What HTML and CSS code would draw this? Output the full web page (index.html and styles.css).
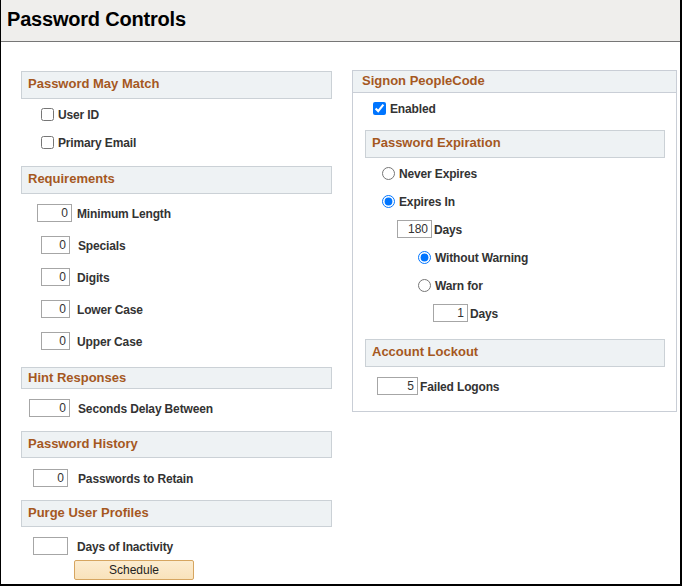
FILE: index.html
```html
<!DOCTYPE html>
<html>
<head>
<meta charset="utf-8">
<title>Password Controls</title>
<link rel="stylesheet" href="styles.css">
</head>
<body>
<div class="frame">
  <div class="titlebar"><h1>Password Controls</h1></div>
  <div class="content">
    <div class="col-left">
      <div class="sec-head">Password May Match</div>
      <label class="chk-row first"><input type="checkbox"><span class="txt">User ID</span></label>
      <label class="chk-row"><input type="checkbox"><span class="txt">Primary Email</span></label>

      <div class="sec-head mt10">Requirements</div>
      <div class="req-list">
        <div class="row pad16"><input class="num w35" type="text" value="0"><span class="lbl g5">Minimum Length</span></div>
        <div class="row pad20"><input class="num w29" type="text" value="0"><span class="lbl g8">Specials</span></div>
        <div class="row pad20"><input class="num w29" type="text" value="0"><span class="lbl g7">Digits</span></div>
        <div class="row pad20"><input class="num w29" type="text" value="0"><span class="lbl g7">Lower Case</span></div>
        <div class="row pad20"><input class="num w29" type="text" value="0"><span class="lbl g7">Upper Case</span></div>
      </div>

      <div class="sec-head short mt10">Hint Responses</div>
      <div class="row pad8 mt3"><input class="num w41" type="text" value="0"><span class="lbl g8">Seconds Delay Between</span></div>

      <div class="sec-head h27 mt7">Password History</div>
      <div class="row pad12 mt4"><input class="num w35" type="text" value="0"><span class="lbl g10">Passwords to Retain</span></div>

      <div class="sec-head h27 mt6">Purge User Profiles</div>
      <div class="row tight pad12 mt10"><input class="num w35" type="text" value=""><span class="lbl g9">Days of Inactivity</span></div>
      <button class="btn" type="button">Schedule</button>
    </div>

    <div class="col-right">
      <div class="group">
        <div class="group-head">Signon PeopleCode</div>
        <label class="enabled-row"><input type="checkbox" checked><span class="txt">Enabled</span></label>

        <div class="sub-head">Password Expiration</div>
        <div class="exp-list">
          <label class="rrow p29"><input type="radio" name="exp"><span class="txt">Never Expires</span></label>
          <label class="rrow p29"><input type="radio" name="exp" checked><span class="txt">Expires In</span></label>
          <div class="rrow p44"><input class="num w35" type="text" value="180"><span class="lbl g2">Days</span></div>
          <label class="rrow p65"><input type="radio" name="warn" checked><span class="txt">Without Warning</span></label>
          <label class="rrow p65"><input type="radio" name="warn"><span class="txt">Warn for</span></label>
          <div class="rrow p80"><input class="num w35" type="text" value="1"><span class="lbl g2">Days</span></div>
        </div>

        <div class="sub-head mt12">Account Lockout</div>
        <div class="lock-row"><input class="num w41" type="text" value="5"><span class="lbl g2">Failed Logons</span></div>
      </div>
    </div>
  </div>
</div>
</body>
</html>
```
FILE: styles.css
```css
html, body {
  margin: 0;
  padding: 0;
  background: #fff;
}

.frame {
  width: 682px;
  height: 586px;
  box-sizing: border-box;
  border-left: 1px solid #000;
  border-right: 2px solid #000;
  border-bottom: 2px solid #000;
  font-family: "Liberation Sans", Arial, sans-serif;
  overflow: hidden;
  background: #fff;
}

.titlebar {
  height: 41px;
  background: #efeeec;
  border-bottom: 1px solid #767676;
  padding-left: 6px;
}

.titlebar h1 {
  margin: 0;
  font-size: 20px;
  line-height: 38px;
  font-weight: bold;
  color: #000;
  letter-spacing: -0.2px;
}

.content {
  display: flex;
  align-items: flex-start;
  padding-left: 20px;
  gap: 20px;
}

.col-left {
  width: 311px;
  padding-top: 29px;
}

.col-right {
  width: 325px;
  padding-top: 28px;
}

/* section headers */
.sec-head {
  box-sizing: border-box;
  height: 28px;
  border: 1px solid #cbd1d6;
  background: #eef2f4;
  color: #a5581f;
  font-size: 13px;
  font-weight: bold;
  line-height: 24px;
  padding: 0 0 2px 6px;
}

.sec-head.short {
  height: 22px;
  line-height: 20px;
  padding-bottom: 0;
}

.sec-head.h27 {
  height: 27px;
  line-height: 23px;
}

.mt3 { margin-top: 3px; }
.mt4 { margin-top: 4px; }
.mt6 { margin-top: 6px; }
.mt7 { margin-top: 7px; }
.mt10 { margin-top: 10px; }
.mt12 { margin-top: 12px; }

/* text next to controls */
.txt,
.lbl {
  display: inline-block;
  padding-top: 2px;
  letter-spacing: -0.15px;
}

/* checkbox rows */
.chk-row {
  display: flex;
  align-items: center;
  height: 28px;
  padding-left: 20px;
  font-size: 12px;
  font-weight: bold;
  color: #333;
}

.chk-row.first { margin-top: 1px; }

.chk-row input,
.enabled-row input,
.rrow input[type="radio"] {
  margin: 0 4px 0 0;
  width: 13px;
  height: 13px;
}

/* numeric rows */
.req-list { margin-top: 3px; }

.row {
  display: flex;
  align-items: center;
  height: 32px;
  font-size: 12px;
  font-weight: bold;
  color: #333;
}

.row.tight { height: 18px; }

.pad8 { padding-left: 8px; }
.pad12 { padding-left: 12px; }
.pad16 { padding-left: 16px; }
.pad20 { padding-left: 20px; }

.num {
  box-sizing: border-box;
  height: 18px;
  margin: 0;
  border: 1px solid #a6a6a6;
  border-radius: 0;
  background: #fff;
  font-family: "Liberation Sans", Arial, sans-serif;
  font-size: 12px;
  font-weight: normal;
  color: #333;
  text-align: right;
  padding: 0 3px 0 0;
  outline: none;
}

.w29 { width: 29px; }
.w35 { width: 35px; }
.w41 { width: 41px; }

.g2 { margin-left: 2px; }
.g5 { margin-left: 5px; }
.g7 { margin-left: 7px; }
.g8 { margin-left: 8px; }
.g9 { margin-left: 9px; }
.g10 { margin-left: 10px; }

.btn {
  display: block;
  box-sizing: border-box;
  width: 120px;
  height: 20px;
  margin: 5px 0 0 53px;
  padding: 0;
  border: 1px solid #d6a560;
  border-radius: 2px;
  background: linear-gradient(#fcecd0, #f9e2bb);
  font-family: "Liberation Sans", Arial, sans-serif;
  font-size: 12px;
  color: #222;
}

/* right group */
.group {
  box-sizing: border-box;
  height: 342px;
  border: 1px solid #c9ced6;
}

.group-head {
  box-sizing: border-box;
  height: 22px;
  border-bottom: 1px solid #c9ced6;
  background: #eef2f4;
  color: #a5581f;
  font-size: 13px;
  font-weight: bold;
  line-height: 20px;
  padding-left: 9px;
}

.enabled-row {
  display: flex;
  align-items: center;
  height: 30px;
  padding-left: 20px;
  font-size: 12px;
  font-weight: bold;
  color: #333;
}

.sub-head {
  box-sizing: border-box;
  width: 300px;
  height: 28px;
  margin-left: 12px;
  margin-top: 7px;
  border: 1px solid #cbd1d6;
  background: #eef2f4;
  color: #a5581f;
  font-size: 13px;
  font-weight: bold;
  line-height: 24px;
  padding: 0 0 2px 6px;
}

.sub-head.mt12 { margin-top: 12px; }

.exp-list { margin-top: 1px; }

.rrow {
  display: flex;
  align-items: center;
  height: 28px;
  font-size: 12px;
  font-weight: bold;
  color: #333;
}

.p29 { padding-left: 29px; }
.p44 { padding-left: 44px; }
.p65 { padding-left: 65px; }
.p80 { padding-left: 80px; }

.lock-row {
  display: flex;
  align-items: center;
  height: 18px;
  margin-top: 10px;
  padding-left: 24px;
  font-size: 12px;
  font-weight: bold;
  color: #333;
}
```
